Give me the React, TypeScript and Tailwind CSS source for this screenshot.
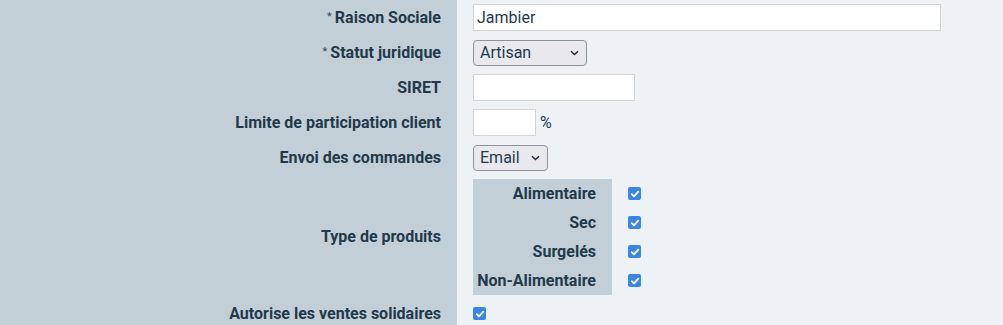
import React from "react";

const font = { fontFamily: "Roboto, 'Liberation Sans', sans-serif" };

function Check() {
  return (
    <div className="flex h-[13px] w-[13px] items-center justify-center rounded-[2px] bg-[#3b86e3]">
      <svg width="10" height="10" viewBox="0 0 10 10">
        <path d="M1.8 5.2 L4 7.3 L8.3 2.7" fill="none" stroke="#fff" strokeWidth="1.8" strokeLinecap="round" strokeLinejoin="round" />
      </svg>
    </div>
  );
}

function Select({ value, width }: { value: string; width: string }) {
  return (
    <div className={`flex h-[26px] ${width} items-center justify-between rounded-[4px] border border-[#8f8f9d] bg-[#e9e9ed] pl-[6px] pr-[7px] text-[16px] text-[#1f3a4d]`}>
      <span>{value}</span>
      <svg width="9" height="6" viewBox="0 0 9 6">
        <path d="M1 1.2 L4.5 4.6 L8 1.2" fill="none" stroke="#1f2937" strokeWidth="1.4" />
      </svg>
    </div>
  );
}

function Input({ width, value }: { width: string; value?: string }) {
  return (
    <div className={`flex h-[27px] ${width} items-center border border-[#d4d4d4] bg-white pl-[3px] text-[16px] text-[#1f3a4d]`}>
      {value}
    </div>
  );
}

function Row({ label, req, children, h }: { label: string; req?: boolean; children: React.ReactNode; h: string }) {
  return (
    <div className={`flex ${h}`}>
      <div className="flex w-[457px] shrink-0 items-center justify-end bg-[#c3cfd6] pr-4 text-[16px] font-bold text-[#1f3a4d]">
        {req && <span className="mr-[3px] text-[11px] font-normal text-[#33475a]">*</span>}
        {label}
      </div>
      <div className="flex flex-1 items-center pl-4">{children}</div>
    </div>
  );
}

export default function App() {
  const types = ["Alimentaire", "Sec", "Surgelés", "Non-Alimentaire"];
  return (
    <div className="h-[325px] w-full overflow-hidden bg-[#eff2f5]" style={font}>
      <Row label="Raison Sociale" req h="h-[35px]">
        <Input width="w-[468px]" value="Jambier" />
      </Row>
      <Row label="Statut juridique" req h="h-[35px]">
        <Select value="Artisan" width="w-[114px]" />
      </Row>
      <Row label="SIRET" h="h-[35px]">
        <Input width="w-[162px]" />
      </Row>
      <Row label="Limite de participation client" h="h-[35px]">
        <Input width="w-[63px]" />
        <span className="ml-[4px] text-[16px] text-[#1f3a4d]">%</span>
      </Row>
      <Row label="Envoi des commandes" h="h-[35px]">
        <Select value="Email" width="w-[75px]" />
      </Row>
      <Row label="Type de produits" h="h-[124px]">
        <div className="flex flex-col">
          {types.map((t) => (
            <div key={t} className="flex h-[29px]">
              <div className="flex w-[139px] items-center justify-end bg-[#c3cfd6] pl-1 pr-4 text-[16px] font-bold text-[#1f3a4d]">
                {t}
              </div>
              <div className="flex items-center pl-4">
                <Check />
              </div>
            </div>
          ))}
        </div>
      </Row>
      <Row label="Autorise les ventes solidaires" h="h-[29px]">
        <Check />
      </Row>
      <div className="h-[40px] w-[457px] bg-[#c3cfd6]" />
    </div>
  );
}
